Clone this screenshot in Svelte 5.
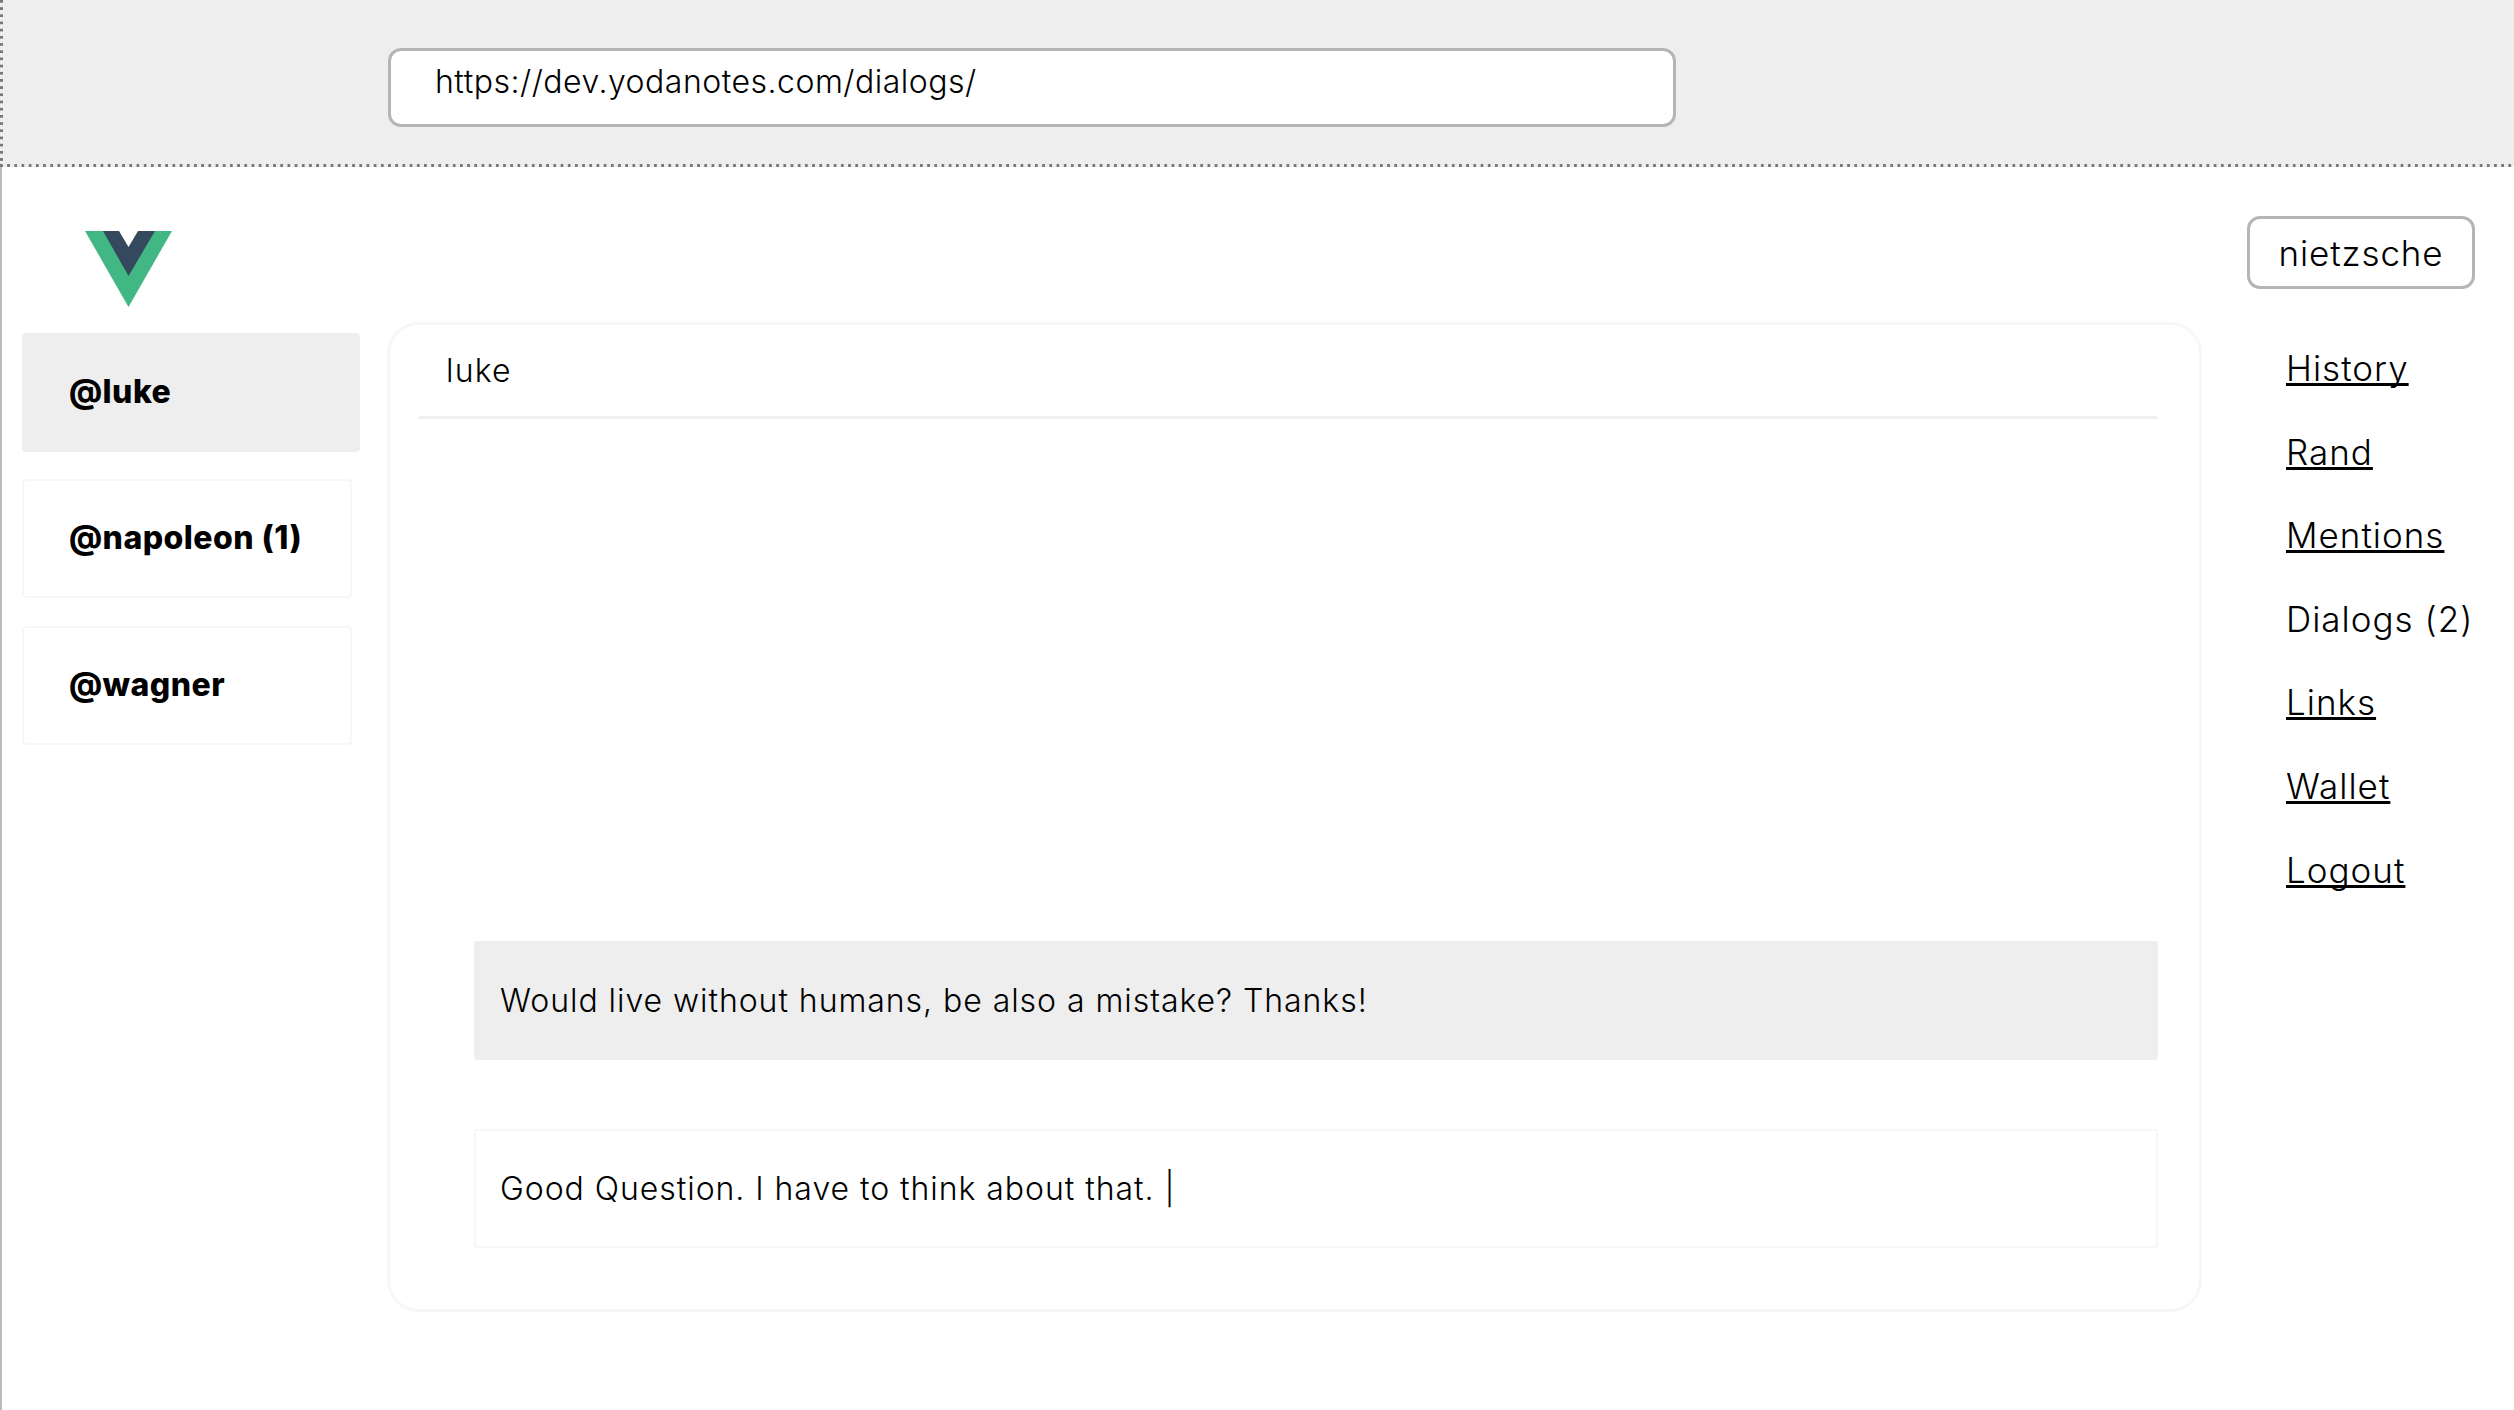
<script>
const threads = [
	{name: "@luke", active: true},
	{name: "@napoleon (1)"},
	{name: "@wagner"}
];

const nav = [
	{label: "History", link: true},
	{label: "Rand", link: true},
	{label: "Mentions", link: true},
	{label: "Dialogs (2)", link: false},
	{label: "Links", link: true},
	{label: "Wallet", link: true},
	{label: "Logout", link: true}
];
</script>

<div class="page">
	<header class="bar">
		<div class="url">https://dev.yodanotes.com/dialogs/</div>
	</header>

	<div class="body">
		<aside class="side">
			<svg class="logo" viewBox="0 0 87 76" width="89" height="76">
				<polygon points="0,0 87,0 43.5,76" fill="#41b883"/>
				<polygon points="18,0 70,0 43.5,45" fill="#35495e"/>
				<polygon points="34,0 53,0 43.5,16" fill="#fff"/>
			</svg>
			{#each threads as t}
			<div class="thread" class:active={t.active}>{t.name}</div>
			{/each}
		</aside>

		<main class="panel">
			<div class="title">luke</div>
			<div class="messages">
				<div class="msg theirs">Would live without humans, be also a mistake? Thanks!</div>
				<div class="msg">Good Question. I have to think about that. |</div>
			</div>
		</main>

		<div class="right">
			<button class="user">nietzsche</button>
			<nav>
				{#each nav as item}
				{#if item.link}
				<a href="#top">{item.label}</a>
				{:else}
				<span>{item.label}</span>
				{/if}
				{/each}
			</nav>
		</div>
	</div>
</div>

<style>
:global(body) {
	background: #fff;
	color: #000;
	font-family: Inter, "Open Sans", sans-serif;
}
.page {
	height: 1410px;
	overflow: hidden;
}
.bar {
	box-sizing: border-box;
	height: 167px;
	padding: 48px 0 0 388px;
	background-color: #eee;
	background-image: linear-gradient(90deg, #777 3px, transparent 3px), linear-gradient(180deg, #777 3px, transparent 3px);
	background-size: 7.2px 3px, 3px 7.2px;
	background-position: left bottom, left top;
	background-repeat: repeat-x, repeat-y;
}
.url {
	box-sizing: border-box;
	width: 1288px;
	height: 79px;
	padding: 9px 0 0 44px;
	background: #fff;
	border: 3px solid #b5b5b5;
	border-radius: 13px;
	font-size: 32px;
	line-height: 44px;
	font-weight: 300;
	letter-spacing: 0.5px;
}
.body {
	display: flex;
	align-items: flex-start;
	height: 1243px;
	border-left: 2px solid #bbb;
}
.side {
	display: flex;
	flex-direction: column;
	align-items: flex-start;
	width: 338px;
	margin-left: 20px;
	padding-top: 64px;
}
.logo {
	margin: 0 0 26px 62px;
}
.thread {
	box-sizing: border-box;
	width: 330px;
	height: 119px;
	margin-bottom: 28px;
	padding-left: 45px;
	border: 2px solid #f7f7f7;
	border-radius: 4px;
	font-size: 32px;
	font-weight: 800;
	letter-spacing: 0.45px;
	line-height: 113px;
}
.thread.active {
	width: 338px;
	margin-bottom: 27px;
	background: #eee;
	border-color: #eee;
}
.panel {
	box-sizing: border-box;
	display: flex;
	flex-direction: column;
	width: 1815px;
	height: 990px;
	margin: 155px 0 0 27px;
	padding: 0 41px 61px 28px;
	border: 3px solid #f7f7f7;
	border-radius: 32px;
}
.title {
	height: 91px;
	padding-left: 28px;
	border-bottom: 3px solid #f0f0f0;
	font-size: 32px;
	font-weight: 300;
	letter-spacing: 1.2px;
	line-height: 92px;
}
.messages {
	flex: 1;
	display: flex;
	flex-direction: column;
	justify-content: flex-end;
	gap: 69px;
	padding-left: 56px;
}
.msg {
	box-sizing: border-box;
	height: 119px;
	padding-left: 24px;
	border: 2px solid #f7f7f7;
	border-radius: 3px;
	font-size: 32px;
	font-weight: 300;
	letter-spacing: 0.95px;
	line-height: 115px;
}
.msg.theirs {
	background: #eee;
	border-color: #eee;
}
.right {
	display: flex;
	flex-direction: column;
	align-items: flex-start;
	margin: 49px 0 0 45px;
}
.user {
	box-sizing: border-box;
	width: 228px;
	height: 73px;
	padding: 0;
	background: #fff;
	border: 3px solid #b5b5b5;
	border-radius: 13px;
	color: inherit;
	font: inherit;
	font-size: 35px;
	font-weight: 350;
	letter-spacing: 0.9px;
}
nav {
	display: flex;
	flex-direction: column;
	margin: 38px 0 0 39px;
	font-size: 35px;
	font-weight: 350;
	letter-spacing: 1px;
	line-height: 83.6px;
}
nav a {
	color: inherit;
	text-decoration-thickness: 3px;
	text-decoration-skip-ink: none;
	text-underline-offset: 2px;
}
</style>
